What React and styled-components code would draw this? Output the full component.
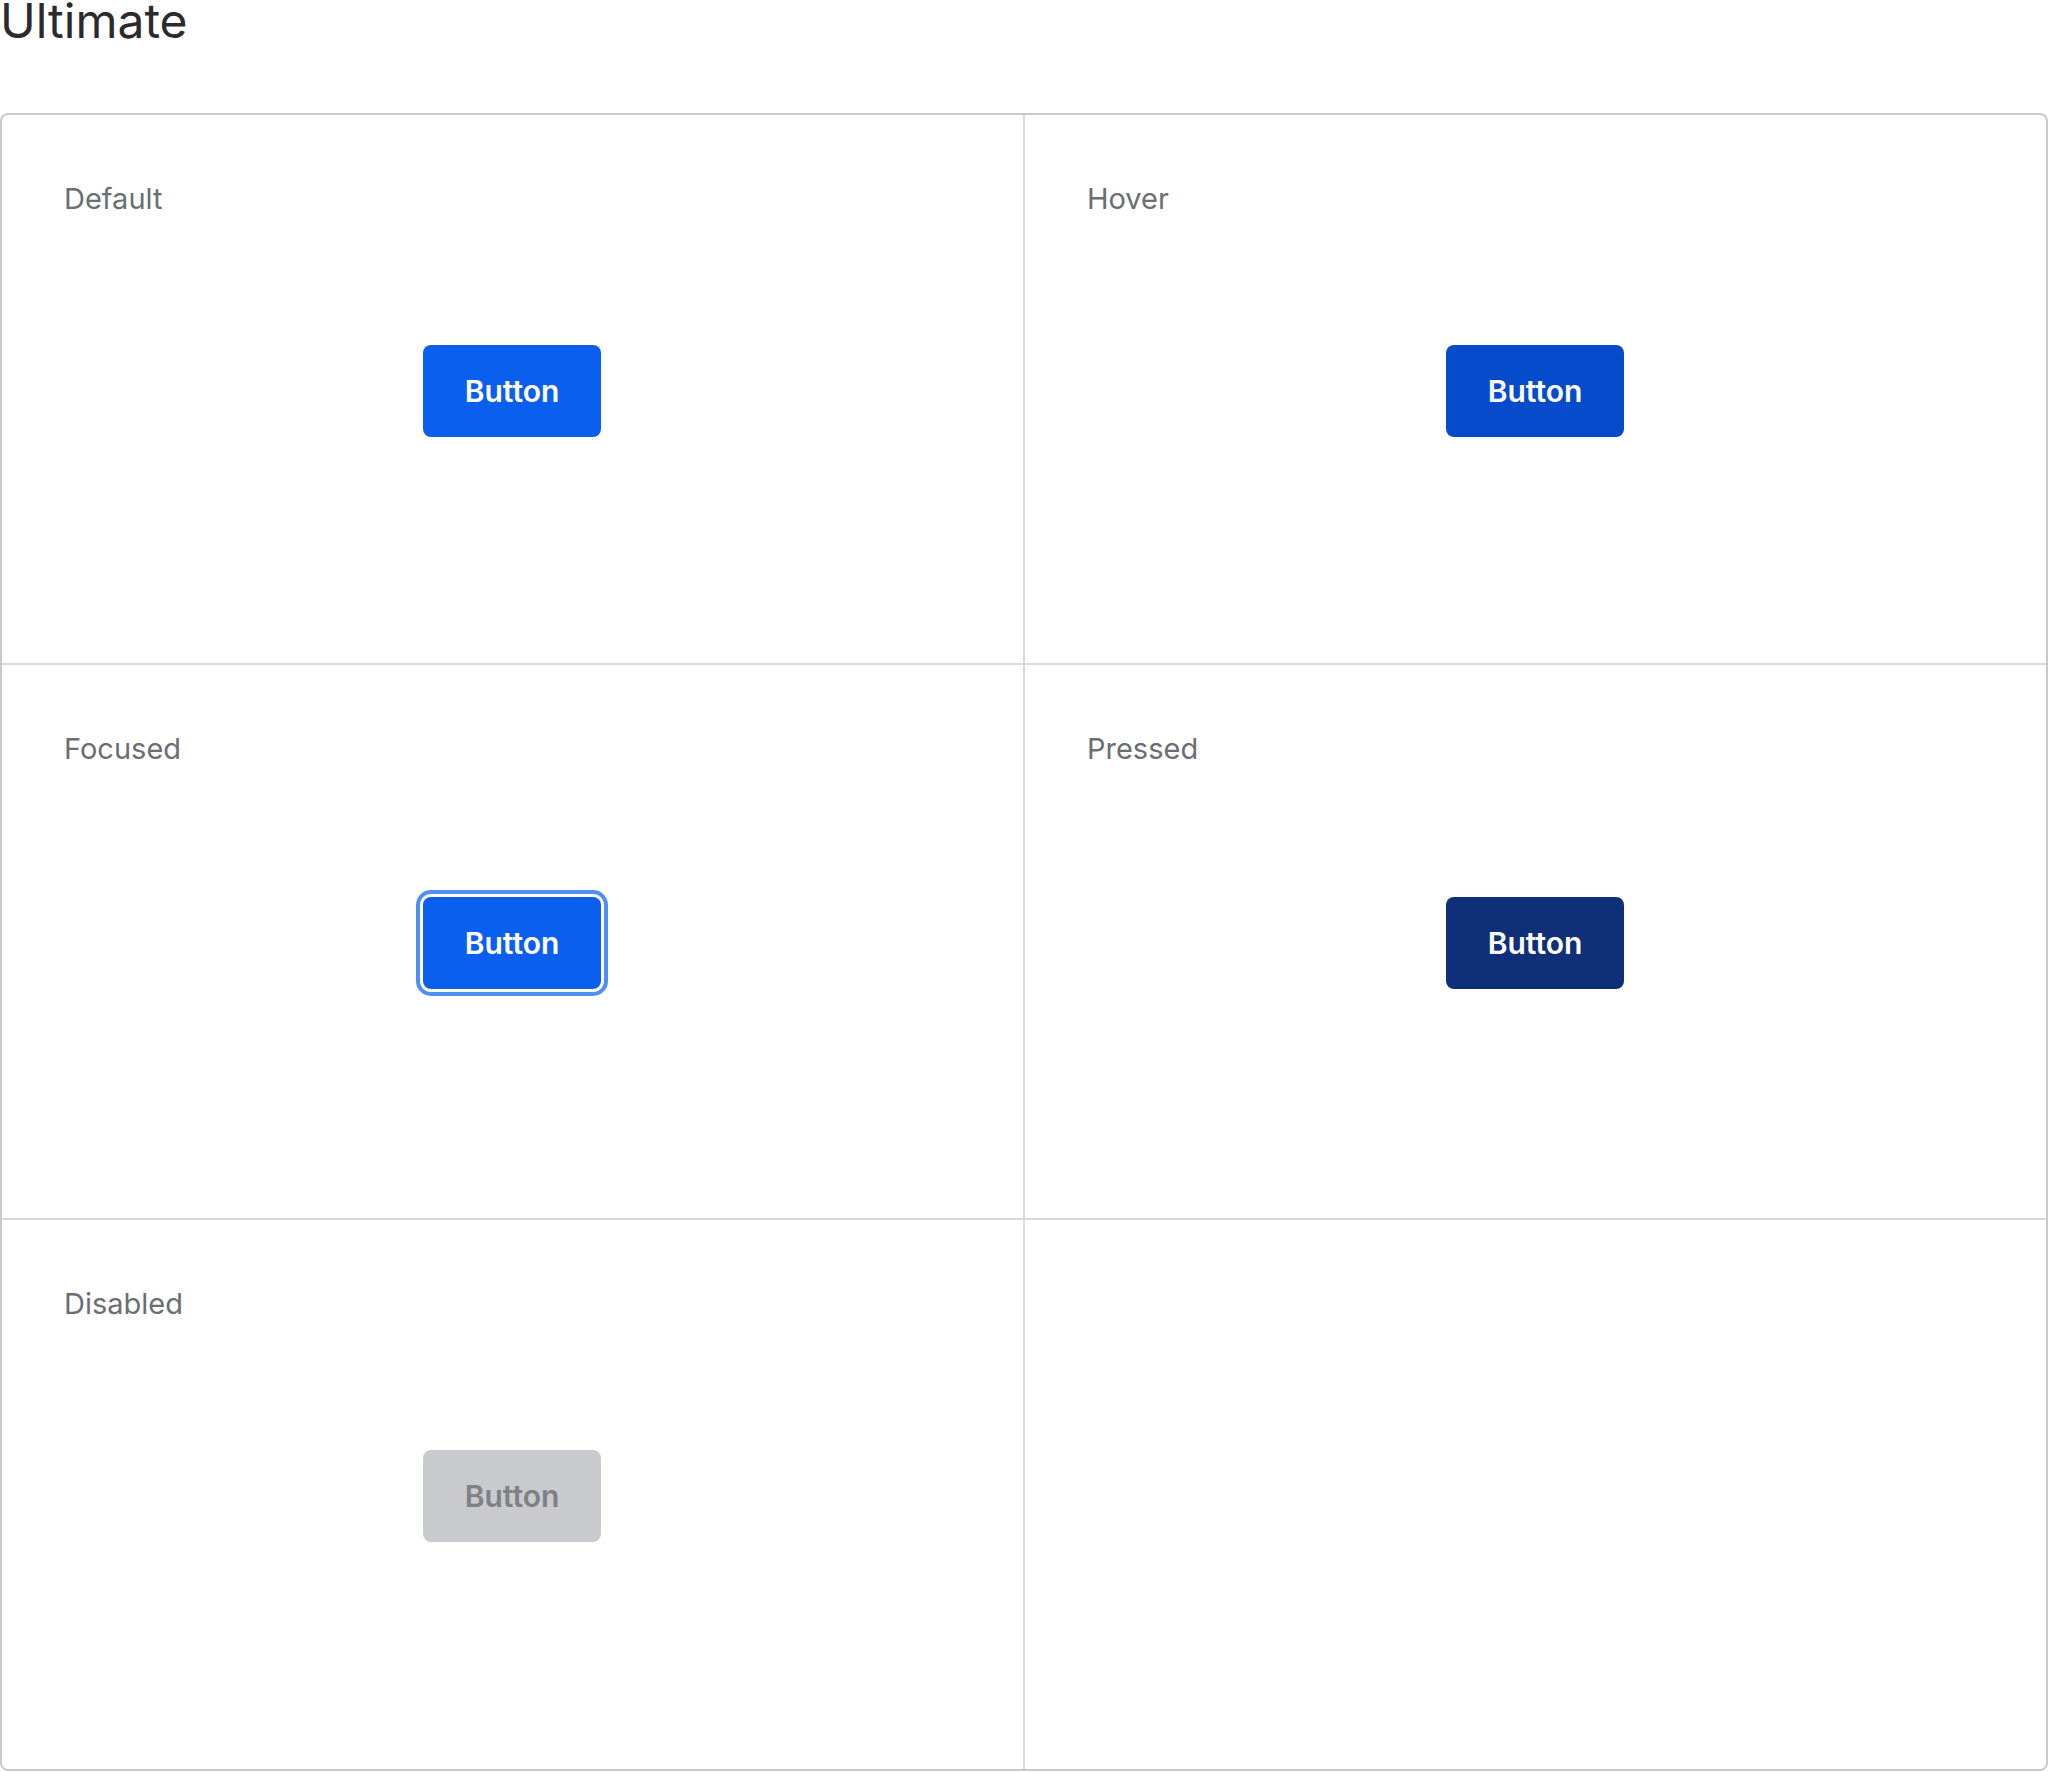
import styled, { createGlobalStyle, css } from "styled-components";

const GlobalStyle = createGlobalStyle`
  html, body {
    margin: 0;
    padding: 0;
    background: #ffffff;
  }
  body {
    font-family: Inter, "Noto Sans", "Liberation Sans", sans-serif;
    -webkit-font-smoothing: antialiased;
  }
`;

const states = [
  { label: "Default", variant: "default" },
  { label: "Hover", variant: "hover" },
  { label: "Focused", variant: "focused" },
  { label: "Pressed", variant: "pressed" },
  { label: "Disabled", variant: "disabled" },
];

const variants = {
  default: css`
    background: #0a5fef;
    color: #ffffff;
  `,
  hover: css`
    background: #054bcc;
    color: #ffffff;
  `,
  focused: css`
    background: #0a5fef;
    color: #ffffff;
    box-shadow: 0 0 0 3px #ffffff, 0 0 0 7px #4f8ef5;
  `,
  pressed: css`
    background: #0f3078;
    color: #ffffff;
  `,
  disabled: css`
    background: #c9cacd;
    color: #7f8085;
    cursor: not-allowed;
  `,
};

const App = () => {
  return (
    <>
      <GlobalStyle />
      <Page>
        <Title>Ultimate</Title>
        <Card>
          {states.map((s) => (
            <Cell key={s.label}>
              <StateLabel>{s.label}</StateLabel>
              <DemoButton $variant={s.variant} disabled={s.variant === "disabled"}>
                Button
              </DemoButton>
            </Cell>
          ))}
          {/* empty slot to close the grid */}
          <Cell />
        </Card>
      </Page>
    </>
  );
};

const Page = styled.main`
  width: 2048px;
`;

const Title = styled.h1`
  margin: -3px 0 0;
  font-size: 48px;
  line-height: 48px;
  font-weight: 400;
  color: #2b2b2d;
`;

const Card = styled.section`
  margin-top: 68px;
  display: grid;
  grid-template-columns: repeat(2, 1fr);
  grid-template-rows: 548px 553px 549px;
  gap: 2px;
  background: #d9d9d9;
  border: 2px solid #c9c9cd;
  border-radius: 8px;
  overflow: hidden;
`;

const Cell = styled.div`
  display: grid;
  grid-template-areas: "stack";
  padding: 61px 63px 58px 62px;
  background: #ffffff;
`;

const StateLabel = styled.span`
  grid-area: stack;
  align-self: start;
  justify-self: start;
  font-size: 29px;
  line-height: 45px;
  color: #6b6e73;
`;

const DemoButton = styled.button`
  grid-area: stack;
  place-self: center;
  width: 178px;
  height: 92px;
  border: none;
  border-radius: 8px;
  font-family: inherit;
  font-size: 30px;
  font-weight: 600;
  cursor: pointer;
  ${({ $variant }) => variants[$variant]}
`;

export default App;
